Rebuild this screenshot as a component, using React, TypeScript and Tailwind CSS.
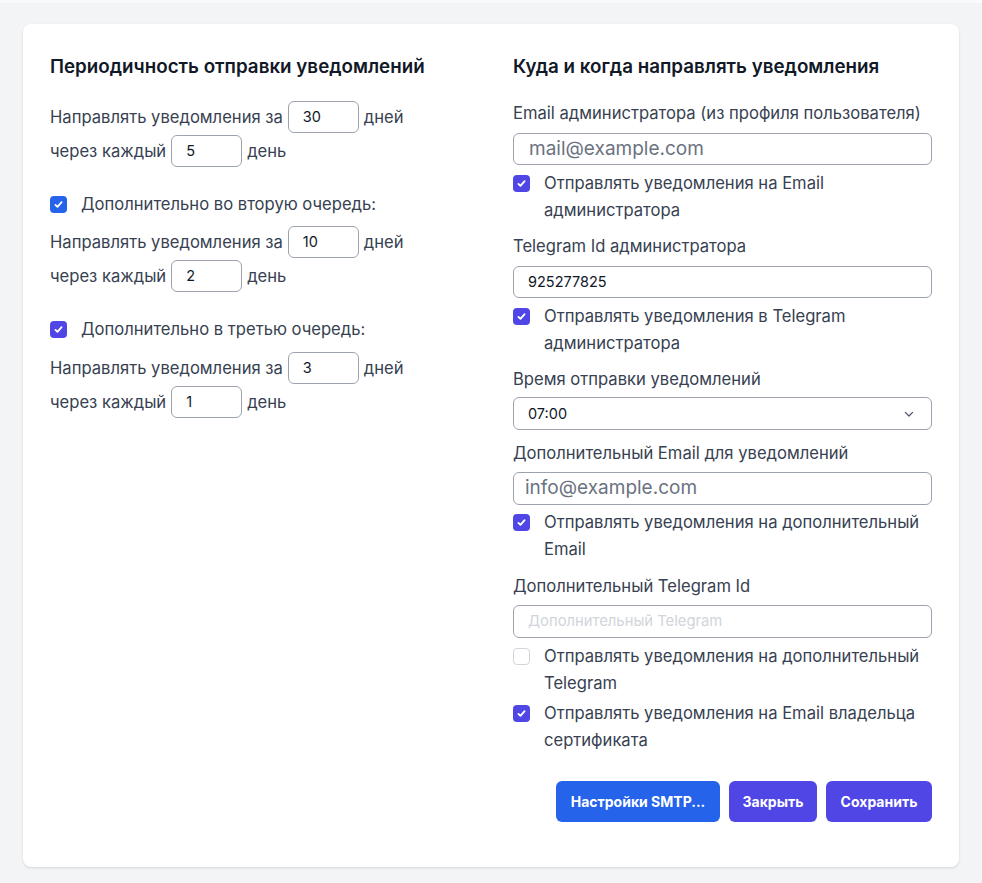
import React from "react";

const font = { fontFamily: "Inter, 'Noto Sans', sans-serif" };

function Tick() {
  return (
    <svg width="11" height="11" viewBox="0 0 16 16" fill="none">
      <path d="M3.5 8.5l3 3 6-7" stroke="white" strokeWidth="2.6" strokeLinecap="round" strokeLinejoin="round" />
    </svg>
  );
}

function Check({ checked }: { checked: boolean }) {
  if (!checked) {
    return <span className="mt-[5px] inline-block h-[17px] w-[17px] shrink-0 rounded-[4px] border border-gray-300 bg-white" />;
  }
  return (
    <span className="mt-[5px] inline-flex h-[17px] w-[17px] shrink-0 items-center justify-center rounded-[4px] bg-[#4f46e5]">
      <Tick />
    </span>
  );
}

function DayRows({ a, b }: { a: string; b: string }) {
  return (
    <div className="flex flex-col gap-[2px]">
      <div className="flex items-center text-[16.6px] text-[#374151]">
        <span>Направлять уведомления за</span>
        <div className="ml-[5px] mr-[5px] flex h-[32px] w-[71px] items-center rounded-md border border-[#9ca3af] px-[14px] text-[14.5px] text-[#111827]">
          {a}
        </div>
        <span>дней</span>
      </div>
      <div className="flex items-center text-[16.6px] text-[#374151]">
        <span>через каждый</span>
        <div className="ml-[5px] mr-[5px] flex h-[32px] w-[71px] items-center rounded-md border border-[#9ca3af] px-[14px] text-[14.5px] text-[#111827]">
          {b}
        </div>
        <span>день</span>
      </div>
    </div>
  );
}

function CheckRow({ checked, children, className }: { checked: boolean; children: React.ReactNode; className?: string }) {
  return (
    <div className={`flex items-start gap-[14px] text-[16.6px] leading-[27px] text-[#374151] ${className ?? ""}`}>
      <Check checked={checked} />
      <span>{children}</span>
    </div>
  );
}

function Label({ children, className }: { children: React.ReactNode; className?: string }) {
  return <div className={`text-[16.6px] leading-6 text-[#374151] ${className ?? ""}`}>{children}</div>;
}

export default function App() {
  return (
    <div style={font} className="min-h-screen bg-[#f3f4f6]">
      <div className="h-[3px] bg-[#f9fafb]" />
      <div className="px-[23px] pb-[16px] pt-[21px]">
        <div className="rounded-lg bg-white px-[27px] pb-[45px] pt-[29px] shadow-sm">
          <div className="grid grid-cols-2 gap-[44px]">
            {/* Left column */}
            <div>
              <h2 className="text-[18.8px] font-semibold leading-7 text-[#111827]">Периодичность отправки уведомлений</h2>
              <div className="mt-[20px]">
                <DayRows a="30" b="5" />
              </div>
              <div className="mt-[25px] flex items-center gap-[14px] text-[16.6px] leading-6 text-[#374151]">
                <span className="inline-flex h-[17px] w-[17px] shrink-0 items-center justify-center rounded-[4px] bg-[#2563eb]">
                  <Tick />
                </span>
                <span>Дополнительно во вторую очередь:</span>
              </div>
              <div className="mt-[10px]">
                <DayRows a="10" b="2" />
              </div>
              <div className="mt-[25px] flex items-center gap-[14px] text-[16.6px] leading-6 text-[#374151]">
                <span className="inline-flex h-[17px] w-[17px] shrink-0 items-center justify-center rounded-[4px] bg-[#4f46e5]">
                  <Tick />
                </span>
                <span>Дополнительно в третью очередь:</span>
              </div>
              <div className="mt-[11px]">
                <DayRows a="3" b="1" />
              </div>
            </div>

            {/* Right column */}
            <div>
              <h2 className="text-[18.8px] font-semibold leading-7 text-[#111827]">Куда и когда направлять уведомления</h2>
              <Label className="mt-[20px]">Email администратора (из профиля пользователя)</Label>
              <div className="mt-[8px] flex h-[32px] items-center rounded-md border border-[#9ca3af] px-[15px] text-[19px] text-[#6b7280]">
                mail@example.com
              </div>
              <CheckRow checked className="mt-[5px]">
                Отправлять уведомления на Email администратора
              </CheckRow>
              <Label className="mt-[10px]">Telegram Id администратора</Label>
              <div className="mt-[8px] flex h-[32px] items-center rounded-md border border-[#9ca3af] px-[14px] text-[14.5px] text-[#111827]">
                925277825
              </div>
              <CheckRow checked className="mt-[5px]">
                Отправлять уведомления в Telegram администратора
              </CheckRow>
              <Label className="mt-[10px]">Время отправки уведомлений</Label>
              <div className="mt-[6px] flex h-[33px] items-center justify-between rounded-md border border-[#9ca3af] pl-[14px] pr-[14px] text-[14.5px] text-[#111827]">
                <span>07:00</span>
                <svg width="16" height="16" viewBox="0 0 20 20" fill="none">
                  <path d="M5.5 8l4.5 4.5L14.5 8" stroke="#4b5563" strokeWidth="1.6" strokeLinecap="round" strokeLinejoin="round" />
                </svg>
              </div>
              <Label className="mt-[11px]">Дополнительный Email для уведомлений</Label>
              <div className="mt-[7px] flex h-[33px] items-center rounded-md border border-[#9ca3af] px-[11px] text-[19px] text-[#6b7280]">
                info@example.com
              </div>
              <CheckRow checked className="mt-[4px]">
                Отправлять уведомления на дополнительный Email
              </CheckRow>
              <Label className="mt-[11px]">Дополнительный Telegram Id</Label>
              <div className="mt-[7px] flex h-[33px] items-center rounded-md border border-[#9ca3af] px-[14px] text-[14.8px] text-[#d1d5db]">
                Дополнительный Telegram
              </div>
              <CheckRow checked={false} className="mt-[5px]">
                Отправлять уведомления на дополнительный Telegram
              </CheckRow>
              <CheckRow checked className="mt-[3px]">
                Отправлять уведомления на Email владельца сертификата
              </CheckRow>
              <div className="mt-[27px] flex justify-end gap-[9px]">
                <button className="h-[41px] w-[164px] rounded-md bg-[#2563eb] text-[14px] font-bold text-white">
                  Настройки SMTP...
                </button>
                <button className="h-[41px] w-[88px] rounded-md bg-[#4f46e5] text-[14px] font-bold text-white">
                  Закрыть
                </button>
                <button className="h-[41px] w-[106px] rounded-md bg-[#4f46e5] text-[14px] font-bold text-white">
                  Сохранить
                </button>
              </div>
            </div>
          </div>
        </div>
      </div>
    </div>
  );
}
